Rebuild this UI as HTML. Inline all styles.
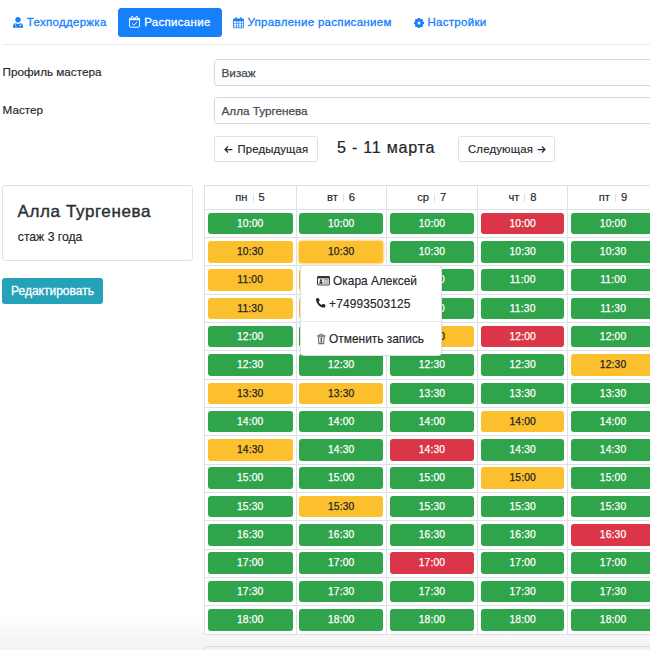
<!DOCTYPE html>
<html><head><meta charset="utf-8">
<style>
*{box-sizing:border-box}
html,body{margin:0;padding:0;background:#fff;width:650px;height:650px;overflow:hidden}
body{font-family:"Liberation Sans",sans-serif;color:#212529;position:relative;-webkit-text-stroke:0.15px currentColor}
.a{position:absolute;white-space:nowrap}
svg{position:absolute;overflow:visible}
.nav{color:#167ffa;font-size:11.5px;line-height:12px;letter-spacing:0.3px;-webkit-text-stroke:0.3px #167ffa}
.pill{left:118px;top:8.3px;width:103.6px;height:28.4px;background:#167ffa;border-radius:3.5px}
.hr{left:2px;top:44px;width:648px;height:1px;background:#ececec}
.lbl{font-size:11.7px;line-height:12px;color:#212529}
.inp{border:1px solid #d3d8de;border-radius:3.5px;background:#fff;font-size:11.7px;line-height:12px;color:#454b51;-webkit-text-stroke:0.25px #454b51}
.btnw{border:1px solid #dee2e6;border-radius:2.5px;background:#fff;font-size:11.3px;line-height:12px;color:#212529}
.card{left:2px;top:185.2px;width:190.7px;height:75.4px;border:1px solid #e2e2e2;border-radius:3px}
.edit{left:2px;top:277.8px;width:101.2px;height:25.9px;background:#23a2b8;border-radius:3px;color:#fff;font-size:12px;line-height:12px;-webkit-text-stroke:0.3px #fff}
.vl{position:absolute;width:1px;background:#dee2e6}
.hl{position:absolute;height:1px;background:#dee2e6}
.b{position:absolute;width:85px;height:21.6px;border-radius:3px;font-size:10.3px;line-height:21.4px;text-align:center;color:#fff;letter-spacing:0.15px;-webkit-text-stroke:0.25px #fff}
.g{background:#30a44b}
.y{background:#fcbf2d;color:#212529;-webkit-text-stroke:0.25px #212529}
.r{background:#da3647}
.foc{box-shadow:0 0 0 1.5px rgba(252,191,45,.45)}
.hd{position:absolute;font-size:11.2px;line-height:12px;text-align:center;width:91.8px;color:#212529}
.hd i{font-style:normal;display:inline-block;width:1px;height:8px;background:#dee2e6;margin:0 5px;vertical-align:-1px}
.pop{left:299.8px;top:264.9px;width:142.5px;height:91.3px;background:#fff;border:1px solid rgba(0,0,0,.13);border-radius:4px;box-shadow:0 1px 4px rgba(0,0,0,.07)}
.pi{font-size:11.9px;line-height:12px;color:#212529}
.bot{left:0;top:612px;width:650px;height:38px;background:linear-gradient(to bottom,rgba(0,0,0,0),rgba(0,0,0,.02) 40%,rgba(0,0,0,.05))}

</style></head><body>
<div class="a pill"></div>
<svg style="left:13px;top:16.6px" width="10" height="10.7" viewBox="0 0 10 10.7"><circle cx="5" cy="2.8" r="2.7" fill="#167ffa"/><path d="M0 10.7V9.1C0 7.3 1.2 6.1 2.8 5.9L5 7.3L7.2 5.9C8.8 6.1 10 7.3 10 9.1V10.7Z" fill="#167ffa"/><path d="M2.3 6.1V8.2Q2.3 9.6 3.6 9.6" stroke="#fff" stroke-width="0.55" fill="none"/><circle cx="7.3" cy="8.6" r="0.75" fill="#fff"/><path d="M7.3 6V7.8" stroke="#fff" stroke-width="0.5"/></svg>
<div class="a nav" style="left:26.8px;top:16px">Техподдержка</div>
<svg style="left:129.2px;top:16.4px" width="11" height="11.6" viewBox="0 0 11 11.6"><rect x="0.5" y="2.2" width="10" height="9" rx="1" fill="none" stroke="#fff" stroke-width="1"/><rect x="0.5" y="2.2" width="10" height="2" fill="#fff"/><rect x="2.3" y="0.1" width="2" height="3.5" rx="0.9" fill="#fff"/><rect x="6.7" y="0.1" width="2" height="3.5" rx="0.9" fill="#fff"/><rect x="2.95" y="1.2" width="0.7" height="1.8" fill="#167ffa"/><rect x="7.35" y="1.2" width="0.7" height="1.8" fill="#167ffa"/><polyline points="3,7.4 4.9,9.1 8.2,5.9" fill="none" stroke="#fff" stroke-width="0.9"/></svg>
<div class="a nav" style="left:144.2px;top:16px;color:#fff;-webkit-text-stroke-color:#fff">Расписание</div>
<svg style="left:233px;top:16.6px" width="11" height="11.5" viewBox="0 0 11 11.5"><rect x="0.1" y="1.6" width="10.8" height="9.7" rx="1.1" fill="#167ffa"/><rect x="1.0" y="4.3" width="2.1" height="2.1" fill="#fff"/><rect x="1.0" y="6.9" width="2.1" height="1.8" fill="#fff"/><rect x="1.0" y="9.2" width="2.1" height="1.3" fill="#fff"/><rect x="3.7" y="4.3" width="1.7" height="2.1" fill="#fff"/><rect x="3.7" y="6.9" width="1.7" height="1.8" fill="#fff"/><rect x="3.7" y="9.2" width="1.7" height="1.3" fill="#fff"/><rect x="6.1" y="4.3" width="2.1" height="2.1" fill="#fff"/><rect x="6.1" y="6.9" width="2.1" height="1.8" fill="#fff"/><rect x="6.1" y="9.2" width="2.1" height="1.3" fill="#fff"/><rect x="8.9" y="4.3" width="1.2" height="2.1" fill="#fff"/><rect x="8.9" y="6.9" width="1.2" height="1.8" fill="#fff"/><rect x="8.9" y="9.2" width="1.2" height="1.3" fill="#fff"/><rect x="2.4" y="0.2" width="1.5" height="2.8" rx="0.6" fill="#167ffa"/><rect x="7" y="0.2" width="1.5" height="2.8" rx="0.6" fill="#167ffa"/></svg>
<div class="a nav" style="left:247.5px;top:16px">Управление расписанием</div>
<svg style="left:414.3px;top:17.7px" width="10" height="10" viewBox="-5 -5 10 10"><g fill="#167ffa"><circle r="3.9"/><rect x="-1.2" y="-5" width="2.4" height="10" rx="0.6"/><rect x="-1.2" y="-5" width="2.4" height="10" rx="0.6" transform="rotate(45)"/><rect x="-1.2" y="-5" width="2.4" height="10" rx="0.6" transform="rotate(90)"/><rect x="-1.2" y="-5" width="2.4" height="10" rx="0.6" transform="rotate(135)"/></g><circle r="1.5" fill="#fff"/></svg>
<div class="a nav" style="left:427.4px;top:16px">Настройки</div>
<div class="a hr"></div>

<div class="a lbl" style="left:2.6px;top:66px">Профиль мастера</div>
<div class="a lbl" style="left:2.6px;top:104px">Мастер</div>
<div class="a inp" style="left:214.4px;top:59.4px;width:460px;height:26.2px"><span class="a" style="left:6.2px;top:7px">Визаж</span></div>
<div class="a inp" style="left:214.4px;top:97.4px;width:460px;height:27px"><span class="a" style="left:6.2px;top:7px">Алла Тургенева</span></div>

<div class="a btnw" style="left:214.2px;top:136.2px;width:103.6px;height:25.8px"><svg style="left:9.2px;top:8.5px" width="9" height="7" viewBox="0 0 9 7"><path d="M8.4 3.5H1.2M4 0.5L1 3.5L4 6.5" fill="none" stroke="#2a2e32" stroke-width="1.25"/></svg><span class="a" style="left:22.4px;top:5.6px;letter-spacing:0.15px">Предыдущая</span></div>
<div class="a" style="left:337px;top:137.9px;font-size:16.1px;line-height:18px;color:#212529;letter-spacing:0.75px;-webkit-text-stroke:0.2px #212529">5 - 11 марта</div>
<div class="a btnw" style="left:458px;top:136.2px;width:96.8px;height:25.8px"><span class="a" style="left:9px;top:5.6px;letter-spacing:0.2px">Следующая</span><svg style="left:77.6px;top:8.5px" width="9" height="7" viewBox="0 0 9 7"><path d="M0.6 3.5H7.8M5 0.5L8 3.5L5 6.5" fill="none" stroke="#2a2e32" stroke-width="1.25"/></svg></div>

<div class="a card"><div class="a" style="left:14.6px;top:15.6px;font-size:17px;line-height:20px;letter-spacing:0.6px;-webkit-text-stroke:0.4px #2b2f33;color:#2b2f33">Алла Тургенева</div><div class="a" style="left:14.8px;top:44px;font-size:12.2px;line-height:14px">стаж 3 года</div></div>
<div class="a edit"><span class="a" style="left:9px;top:7px">Редактировать</span></div>

<div class="a bot"></div>
<div class="a" style="left:204px;top:646px;width:520px;height:40px;border:1px solid #d9dcdf;border-radius:4px"></div>
<div class="a" style="left:204px;top:185px;width:456px;height:450px;background:#fff"></div>
<div class="vl" style="left:204.00px;top:185.0px;height:449.60px"></div>
<div class="vl" style="left:295.50px;top:185.0px;height:449.60px"></div>
<div class="vl" style="left:386.00px;top:185.0px;height:449.60px"></div>
<div class="vl" style="left:477.00px;top:185.0px;height:449.60px"></div>
<div class="vl" style="left:567.40px;top:185.0px;height:449.60px"></div>
<div class="vl" style="left:658.00px;top:185.0px;height:449.60px"></div>
<div class="hl" style="left:204.0px;top:185.0px;width:455.25px"></div>
<div class="hl" style="left:204.0px;top:208.80px;width:455.25px"></div>
<div class="hl" style="left:204.0px;top:237.12px;width:455.25px"></div>
<div class="hl" style="left:204.0px;top:265.44px;width:455.25px"></div>
<div class="hl" style="left:204.0px;top:293.76px;width:455.25px"></div>
<div class="hl" style="left:204.0px;top:322.08px;width:455.25px"></div>
<div class="hl" style="left:204.0px;top:350.40px;width:455.25px"></div>
<div class="hl" style="left:204.0px;top:378.72px;width:455.25px"></div>
<div class="hl" style="left:204.0px;top:407.04px;width:455.25px"></div>
<div class="hl" style="left:204.0px;top:435.36px;width:455.25px"></div>
<div class="hl" style="left:204.0px;top:463.68px;width:455.25px"></div>
<div class="hl" style="left:204.0px;top:492.00px;width:455.25px"></div>
<div class="hl" style="left:204.0px;top:520.32px;width:455.25px"></div>
<div class="hl" style="left:204.0px;top:548.64px;width:455.25px"></div>
<div class="hl" style="left:204.0px;top:576.96px;width:455.25px"></div>
<div class="hl" style="left:204.0px;top:605.28px;width:455.25px"></div>
<div class="hl" style="left:204.0px;top:633.60px;width:455.25px"></div>
<div class="hd" style="left:204.00px;width:92.10px;top:191.00px">пн<i></i>5</div>
<div class="hd" style="left:295.50px;width:91.10px;top:191.00px">вт<i></i>6</div>
<div class="hd" style="left:386.00px;width:91.60px;top:191.00px">ср<i></i>7</div>
<div class="hd" style="left:477.00px;width:91.00px;top:191.00px">чт<i></i>8</div>
<div class="hd" style="left:567.40px;width:91.20px;top:191.00px">пт<i></i>9</div>
<div class="b g" style="left:207.80px;width:84.80px;top:212.60px">10:00</div>
<div class="b g" style="left:299.30px;width:83.80px;top:212.60px">10:00</div>
<div class="b g" style="left:389.80px;width:84.30px;top:212.60px">10:00</div>
<div class="b r" style="left:480.80px;width:83.70px;top:212.60px">10:00</div>
<div class="b g" style="left:571.20px;width:83.90px;top:212.60px">10:00</div>
<div class="b y" style="left:207.80px;width:84.80px;top:240.92px">10:30</div>
<div class="b y foc" style="left:299.30px;width:83.80px;top:240.92px">10:30</div>
<div class="b g" style="left:389.80px;width:84.30px;top:240.92px">10:30</div>
<div class="b g" style="left:480.80px;width:83.70px;top:240.92px">10:30</div>
<div class="b g" style="left:571.20px;width:83.90px;top:240.92px">10:30</div>
<div class="b y" style="left:207.80px;width:84.80px;top:269.24px">11:00</div>
<div class="b y" style="left:299.30px;width:83.80px;top:269.24px">11:00</div>
<div class="b g" style="left:389.80px;width:84.30px;top:269.24px">11:00</div>
<div class="b g" style="left:480.80px;width:83.70px;top:269.24px">11:00</div>
<div class="b g" style="left:571.20px;width:83.90px;top:269.24px">11:00</div>
<div class="b y" style="left:207.80px;width:84.80px;top:297.56px">11:30</div>
<div class="b y" style="left:299.30px;width:83.80px;top:297.56px">11:30</div>
<div class="b g" style="left:389.80px;width:84.30px;top:297.56px">11:30</div>
<div class="b g" style="left:480.80px;width:83.70px;top:297.56px">11:30</div>
<div class="b g" style="left:571.20px;width:83.90px;top:297.56px">11:30</div>
<div class="b g" style="left:207.80px;width:84.80px;top:325.88px">12:00</div>
<div class="b g" style="left:299.30px;width:83.80px;top:325.88px">12:00</div>
<div class="b y" style="left:389.80px;width:84.30px;top:325.88px">12:00</div>
<div class="b r" style="left:480.80px;width:83.70px;top:325.88px">12:00</div>
<div class="b g" style="left:571.20px;width:83.90px;top:325.88px">12:00</div>
<div class="b g" style="left:207.80px;width:84.80px;top:354.20px">12:30</div>
<div class="b g" style="left:299.30px;width:83.80px;top:354.20px">12:30</div>
<div class="b g" style="left:389.80px;width:84.30px;top:354.20px">12:30</div>
<div class="b g" style="left:480.80px;width:83.70px;top:354.20px">12:30</div>
<div class="b y" style="left:571.20px;width:83.90px;top:354.20px">12:30</div>
<div class="b y" style="left:207.80px;width:84.80px;top:382.52px">13:30</div>
<div class="b y" style="left:299.30px;width:83.80px;top:382.52px">13:30</div>
<div class="b g" style="left:389.80px;width:84.30px;top:382.52px">13:30</div>
<div class="b g" style="left:480.80px;width:83.70px;top:382.52px">13:30</div>
<div class="b g" style="left:571.20px;width:83.90px;top:382.52px">13:30</div>
<div class="b g" style="left:207.80px;width:84.80px;top:410.84px">14:00</div>
<div class="b g" style="left:299.30px;width:83.80px;top:410.84px">14:00</div>
<div class="b g" style="left:389.80px;width:84.30px;top:410.84px">14:00</div>
<div class="b y" style="left:480.80px;width:83.70px;top:410.84px">14:00</div>
<div class="b g" style="left:571.20px;width:83.90px;top:410.84px">14:00</div>
<div class="b y" style="left:207.80px;width:84.80px;top:439.16px">14:30</div>
<div class="b g" style="left:299.30px;width:83.80px;top:439.16px">14:30</div>
<div class="b r" style="left:389.80px;width:84.30px;top:439.16px">14:30</div>
<div class="b g" style="left:480.80px;width:83.70px;top:439.16px">14:30</div>
<div class="b g" style="left:571.20px;width:83.90px;top:439.16px">14:30</div>
<div class="b g" style="left:207.80px;width:84.80px;top:467.48px">15:00</div>
<div class="b g" style="left:299.30px;width:83.80px;top:467.48px">15:00</div>
<div class="b g" style="left:389.80px;width:84.30px;top:467.48px">15:00</div>
<div class="b y" style="left:480.80px;width:83.70px;top:467.48px">15:00</div>
<div class="b g" style="left:571.20px;width:83.90px;top:467.48px">15:00</div>
<div class="b g" style="left:207.80px;width:84.80px;top:495.80px">15:30</div>
<div class="b y" style="left:299.30px;width:83.80px;top:495.80px">15:30</div>
<div class="b g" style="left:389.80px;width:84.30px;top:495.80px">15:30</div>
<div class="b g" style="left:480.80px;width:83.70px;top:495.80px">15:30</div>
<div class="b g" style="left:571.20px;width:83.90px;top:495.80px">15:30</div>
<div class="b g" style="left:207.80px;width:84.80px;top:524.12px">16:30</div>
<div class="b g" style="left:299.30px;width:83.80px;top:524.12px">16:30</div>
<div class="b g" style="left:389.80px;width:84.30px;top:524.12px">16:30</div>
<div class="b g" style="left:480.80px;width:83.70px;top:524.12px">16:30</div>
<div class="b r" style="left:571.20px;width:83.90px;top:524.12px">16:30</div>
<div class="b g" style="left:207.80px;width:84.80px;top:552.44px">17:00</div>
<div class="b g" style="left:299.30px;width:83.80px;top:552.44px">17:00</div>
<div class="b r" style="left:389.80px;width:84.30px;top:552.44px">17:00</div>
<div class="b g" style="left:480.80px;width:83.70px;top:552.44px">17:00</div>
<div class="b g" style="left:571.20px;width:83.90px;top:552.44px">17:00</div>
<div class="b g" style="left:207.80px;width:84.80px;top:580.76px">17:30</div>
<div class="b g" style="left:299.30px;width:83.80px;top:580.76px">17:30</div>
<div class="b g" style="left:389.80px;width:84.30px;top:580.76px">17:30</div>
<div class="b g" style="left:480.80px;width:83.70px;top:580.76px">17:30</div>
<div class="b g" style="left:571.20px;width:83.90px;top:580.76px">17:30</div>
<div class="b g" style="left:207.80px;width:84.80px;top:609.08px">18:00</div>
<div class="b g" style="left:299.30px;width:83.80px;top:609.08px">18:00</div>
<div class="b g" style="left:389.80px;width:84.30px;top:609.08px">18:00</div>
<div class="b g" style="left:480.80px;width:83.70px;top:609.08px">18:00</div>
<div class="b g" style="left:571.20px;width:83.90px;top:609.08px">18:00</div>

<div class="a pop">
<svg style="left:16px;top:10.6px" width="13" height="9.5" viewBox="0 0 13 9.5"><rect x="0.55" y="0.55" width="11.9" height="8.4" rx="0.9" fill="none" stroke="#3d4246" stroke-width="1.1"/><rect x="0.5" y="0.5" width="12" height="1.9" fill="#2f3337"/><circle cx="4" cy="4.3" r="1.15" fill="#2f3337"/><path d="M2.1 7.8L2.7 5.6H5.3L5.9 7.8Z" fill="#2f3337"/><rect x="7.1" y="3.6" width="3.9" height="3.6" fill="#cfcfcf" stroke="#8a8a8a" stroke-width="0.7"/></svg>
<div class="a pi" style="left:32.3px;top:9.3px">Окара Алексей</div>
<svg style="left:15.5px;top:32.3px" width="9.5" height="9.5" viewBox="0 0 512 512"><path d="M497.4 361.8l-112-48a24 24 0 0 0-28 6.9l-49.6 60.6A370.7 370.7 0 0 1 130.6 204.1l60.6-49.6a23.9 23.9 0 0 0 6.9-28l-48-112A24.2 24.2 0 0 0 122.6.6l-104 24A24 24 0 0 0 0 48c0 256.5 207.9 464 464 464a24 24 0 0 0 23.4-18.6l24-104a24.3 24.3 0 0 0-14-27.6z" fill="#212529"/></svg>
<div class="a pi" style="left:28.3px;top:32px;letter-spacing:0.15px">+74993503125</div>
<div class="a" style="left:0;top:55.5px;width:140px;height:1px;background:#e9ecef"></div>
<svg style="left:16.6px;top:68.2px" width="8.6" height="10.2" viewBox="0 0 8.6 10.2"><path d="M0 1.3H8.6V2.5H0Z" fill="#5a5f63"/><path d="M2.6 1.4V0.3H6V1.4" fill="none" stroke="#5a5f63" stroke-width="0.8"/><path d="M0.9 2.4H7.7L7.2 10.2H1.4Z" fill="#6a6f73"/><path d="M2 3.3H6.6L6.3 8.8H2.3Z" fill="#f2f2f2"/><rect x="3.7" y="3.6" width="1.2" height="4.8" fill="#3a3f43"/></svg>
<div class="a pi" style="left:28.3px;top:67px">Отменить запись</div>
</div>


</body></html>
